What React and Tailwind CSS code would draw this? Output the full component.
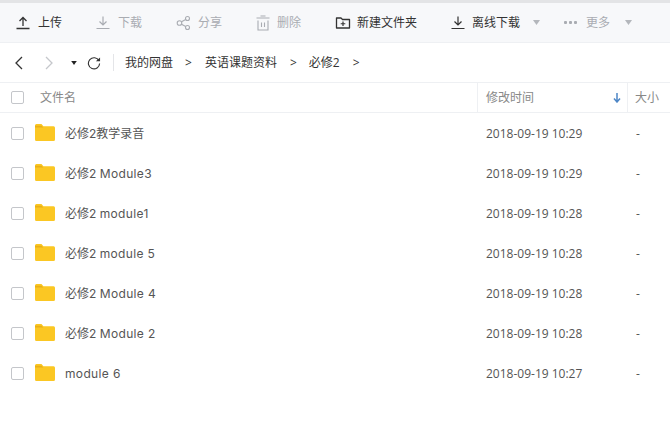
import React from 'react';

const FONT = "font-['Microsoft_YaHei','Open_Sans','Noto_Sans_CJK_SC',sans-serif]";

const rows = [
  { cn: '必修2教学录音', time: '2018-09-19 10:29' },
  { cn: '必修2 ', latin: 'Module3', time: '2018-09-19 10:29' },
  { cn: '必修2 ', latin: 'module1', time: '2018-09-19 10:28' },
  { cn: '必修2 ', latin: 'module 5', time: '2018-09-19 10:28' },
  { cn: '必修2 ', latin: 'Module 4', time: '2018-09-19 10:28' },
  { cn: '必修2 ', latin: 'Module 2', time: '2018-09-19 10:28' },
  { latin: 'module 6', time: '2018-09-19 10:27' },
];

const Svg = ({ children, className }) => (
  <svg width="16" height="16" viewBox="0 0 16 16" fill="none" stroke="currentColor" strokeWidth="1.1" className={className}>
    {children}
  </svg>
);

const UploadIcon = () => (
  <Svg><path d="M8 11V2.500M4.500 6 8 2.500 11.500 6M1.500 13.500h13" strokeWidth="1.300" /></Svg>
);
const DownloadIcon = () => (
  <Svg><path d="M8 1.500V10M4.500 6.500 8 10l3.500-3.500M1.500 13.500h13" strokeWidth="1.200" /></Svg>
);
const ShareIcon = () => (
  <Svg>
    <circle cx="3.500" cy="8" r="2.300" />
    <circle cx="11.500" cy="3.500" r="2" />
    <circle cx="11.500" cy="12.500" r="2" />
    <path d="M5.500 6.800 9.700 4.500M5.500 9.200l4.200 2.300" />
  </Svg>
);
const TrashIcon = () => (
  <Svg><path d="M1.500 3h13M5.500 1h5M3 5.500V15h10V5.500M6.500 7.500v4.500M9.500 7.500v4.500" /></Svg>
);
const NewFolderIcon = () => (
  <Svg>
    <path d="M1.500 13V3h4.500l1.500 1.500h7V13z" strokeWidth="1.300" strokeLinejoin="round" />
    <path d="M8 6.500v4.500M5.700 8.750h4.600" strokeWidth="1.200" />
  </Svg>
);
const Caret = ({ className }) => (
  <svg width="7" height="5" viewBox="0 0 7 5" className={className}><path d="M0 0h7L3.500 5z" fill="currentColor" /></svg>
);

const Action = ({ icon, label, muted, className = '' }) => (
  <div className={`flex items-center gap-[6px] ${muted ? 'text-[#a9acb2]' : 'text-[#333]'} ${className}`}>
    {icon}
    <span className="text-[12px] pt-[1px]">{label}</span>
  </div>
);

const Checkbox = () => (
  <div className="w-[13px] h-[13px] rounded-[2px] border border-[#c4c6ca] bg-white" />
);

const FolderIcon = () => (
  <svg width="20" height="17" viewBox="0 0 21 17" preserveAspectRatio="none" className="shrink-0 block">
    <path d="M0 1.500A1.500 1.500 0 0 1 1.500 0h5.300l2 2.300h10.700A1.500 1.500 0 0 1 21 3.800v11.700a1.500 1.500 0 0 1-1.500 1.500h-18A1.500 1.500 0 0 1 0 15.500z" fill="#fbc723" />
    <path d="M0 3.500h8.800l-2-1.700H0z" fill="#e9b017" />
  </svg>
);

export default function App() {
  return (
    <div className={`w-[670px] h-[438px] bg-white overflow-hidden ${FONT}`}>
      <div className="h-[3px] bg-[#e3e4e6]" />
      {/* toolbar */}
      <div className="h-[40px] bg-[#f7f8fa] border-b border-[#eef0f3] flex items-center pl-[15px]">
        <Action icon={<UploadIcon />} label="上传" className="gap-[7px]" />
        <Action icon={<DownloadIcon />} label="下载" muted className="ml-[33px] gap-[7px]" />
        <Action icon={<ShareIcon />} label="分享" muted className="ml-[34px]" />
        <Action icon={<TrashIcon />} label="删除" muted className="ml-[33px]" />
        <Action icon={<NewFolderIcon />} label="新建文件夹" className="ml-[34px]" />
        <Action icon={<DownloadIcon />} label="离线下载" className="ml-[33px]" />
        <Caret className="ml-[13px] text-[#b4b7bc]" />
        <div className="ml-[24px] flex items-center gap-[9px] text-[#a9acb2]">
          <svg width="13" height="3" viewBox="0 0 13 3" fill="currentColor">
            <rect x="0" y="0" width="3" height="3" rx="1" />
            <rect x="5" y="0" width="3" height="3" rx="1" />
            <rect x="10" y="0" width="3" height="3" rx="1" />
          </svg>
          <span className="text-[12px] pt-[1px]">更多</span>
        </div>
        <Caret className="ml-[15px] text-[#b4b7bc]" />
      </div>
      {/* breadcrumb */}
      <div className="h-[40px] border-b border-[#eef0f3] flex items-center pl-[14px] text-[#333]">
        <svg width="10" height="14" viewBox="0 0 10 14" fill="none" stroke="#333" strokeWidth="1.300"><path d="M8 1 2 7l6 6" /></svg>
        <svg width="10" height="14" viewBox="0 0 10 14" fill="none" stroke="#c5c7cb" strokeWidth="1.300" className="ml-[20px]"><path d="m2 1 6 6-6 6" /></svg>
        <Caret className="ml-[17px] text-[#222] w-[6px] h-[4px]" />
        <svg width="14" height="14" viewBox="0 0 15 15" fill="none" stroke="#333" strokeWidth="1.200" className="ml-[10px]">
          <path d="M12.800 5A6 6 0 1 0 13.500 8" />
          <path d="M9.500 5.500h4.500V1.500z" fill="#333" stroke="none" />
        </svg>
        <div className="ml-[12px] w-px h-[17px] bg-[#e4e5e8]" />
        <div className="ml-[11px] flex items-center text-[12px] text-[#333]">
          <span>我的网盘</span>
          <span className="ml-[12px]">&gt;</span>
          <span className="ml-[13px]">英语课题资料</span>
          <span className="ml-[13px]">&gt;</span>
          <span className="ml-[12px]">必修2</span>
          <span className="ml-[13px]">&gt;</span>
        </div>
      </div>
      {/* table header */}
      <div className="h-[30px] border-b border-[#eef0f3] flex items-center text-[12px] text-[#888]">
        <div className="w-[477px] flex items-center pl-[11px]">
          <Checkbox />
          <span className="ml-[16px]">文件名</span>
        </div>
        <div className="w-[150px] h-full border-l border-[#eef0f3] flex items-center pl-[8px] pr-[6px] justify-between">
          <span>修改时间</span>
          <svg width="8" height="10" viewBox="0 0 8 10" fill="none" stroke="#4d86c6" strokeWidth="1.500" className="mt-[1px]"><path d="M4 0v9M1 5.500 4 9l3-3.500" /></svg>
        </div>
        <div className="flex-1 h-full border-l border-[#eef0f3] flex items-center pl-[7px]">大小</div>
      </div>
      {/* rows */}
      <div>
        {rows.map((row) => (
          <div key={row.time + (row.cn || '') + row.latin} className="h-[40px] flex items-center text-[12px] text-[#555]">
            <div className="w-[478px] flex items-center pl-[11px]">
              <Checkbox />
              <div className="ml-[11px] -mt-[1px]"><FolderIcon /></div>
              <span className="ml-[10px] pt-[2px] font-['Inter','Noto_Sans_CJK_SC',sans-serif]">
                {row.cn}
                {row.latin && <span className="tracking-[0.35px]">{row.latin}</span>}
              </span>
            </div>
            <div className="w-[150px] pl-[8px] pt-[2px]">{row.time}</div>
            <div className="pl-[8px] pt-[2px]">-</div>
          </div>
        ))}
      </div>
    </div>
  );
}
